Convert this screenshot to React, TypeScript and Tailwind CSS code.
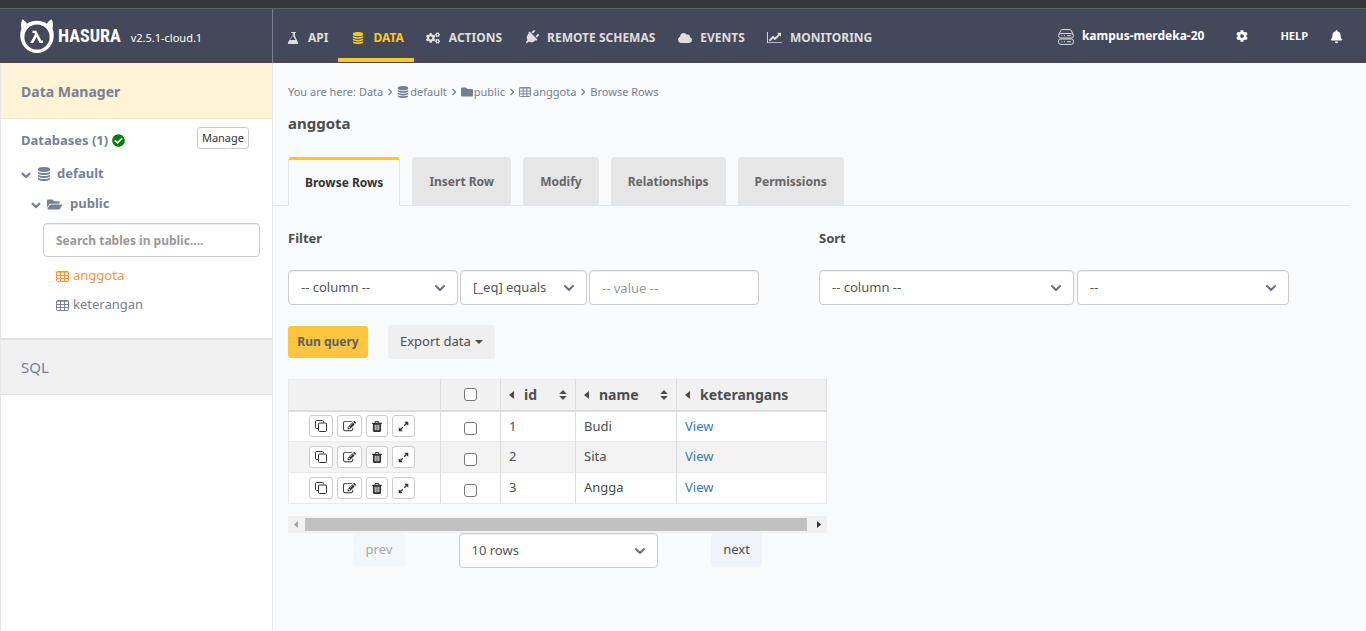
import type { ReactNode } from 'react';
import {
  FaBell,
  FaCheckCircle,
  FaCloud,
  FaCog,
  FaCogs,
  FaFolder,
  FaFolderOpen,
  FaPlug,
} from 'react-icons/fa';
import { ChevronDown } from 'lucide-react';

type IconProps = { className?: string };

function Glyph({ d, viewBox = '0 0 1792 1792', className }: { d: string; viewBox?: string; className?: string }) {
  return (
    <svg viewBox={viewBox} fill="currentColor" aria-hidden="true" className={className}>
      <path d={d} />
    </svg>
  );
}

const DATABASE =
  'M896 768q237 0 443-43t325-127v170q0 69-103 128t-280 93.5-385 34.5-385-34.5-280-93.5-103-128v-170q119 84 325 127t443 43zm0 768q237 0 443-43t325-127v170q0 69-103 128t-280 93.5-385 34.5-385-34.5-280-93.5-103-128v-170q119 84 325 127t443 43zm0-384q237 0 443-43t325-127v170q0 69-103 128t-280 93.5-385 34.5-385-34.5-280-93.5-103-128v-170q119 84 325 127t443 43zm0-1152q208 0 385 34.5t280 93.5 103 128v128q0 69-103 128t-280 93.5-385 34.5-385-34.5-280-93.5-103-128v-128q0-69 103-128t280-93.5 385-34.5z';
const FLASK =
  'M1527 1447q56 89 21.5 153t-140.5 64h-1024q-106 0-140.5-64t21.5-153l503-793v-399h-64q-26 0-45-19t-19-45 19-45 45-19h512q26 0 45 19t19 45-19 45-45 19h-64v399zm-749-725l-272 430h712l-272-430-20-31v-436h-128v436z';
const LINE_CHART =
  'M2048 1536v128h-2048v-1536h128v1408h1920zM1920 288v435q0 21-19.5 29.5t-35.5-7.5l-121-121-633 633q-10 10-23 10t-23-10l-233-233-416 416-192-192 585-585q10-10 23-10t23 10l233 233 464-464-121-121q-16-16-7.5-35.5t29.5-19.5h435q14 0 23 9t9 23z';
const EDIT =
  'M888 1184l116-116-152-152-116 116v56h96v96h56zm440-720q-16-16-33 1l-350 350q-17 17-1 33t33-1l350-350q17-17 1-33zm80 594v190q0 119-84.5 203.5t-203.5 84.5h-832q-119 0-203.5-84.5t-84.5-203.5v-832q0-119 84.5-203.5t203.5-84.5h832q63 0 117 25 15 7 18 23 3 17-9 29l-49 49q-14 14-32 8-23-6-45-6h-832q-66 0-113 47t-47 113v832q0 66 47 113t113 47h832q66 0 113-47t47-113v-126q0-13 9-22l64-64q15-15 35-7t20 29zm-96-738l288 288-672 672h-288v-288zm444 132l-92 92-288-288 92-92q28-28 68-28t68 28l152 152q28 28 28 68t-28 68z';
const TRASH =
  'M704 1376v-704q0-14-9-23t-23-9h-64q-14 0-23 9t-9 23v704q0 14 9 23t23 9h64q14 0 23-9t9-23zm256 0v-704q0-14-9-23t-23-9h-64q-14 0-23 9t-9 23v704q0 14 9 23t23 9h64q14 0 23-9t9-23zm256 0v-704q0-14-9-23t-23-9h-64q-14 0-23 9t-9 23v704q0 14 9 23t23 9h64q14 0 23-9t9-23zm-544-992h448l-48-117q-7-9-17-11h-317q-10 2-17 11zm928 32v64q0 14-9 23t-23 9h-96v948q0 83-47 143.5t-113 60.5h-832q-66 0-113-58.5t-47-141.5v-952h-96q-14 0-23-9t-9-23v-64q0-14 9-23t23-9h309l70-167q15-37 54-63t79-26h320q40 0 79 26t54 63l70 167h309q14 0 23 9t9 23z';

const DatabaseIcon = ({ className }: IconProps) => <Glyph d={DATABASE} className={className} />;
const FlaskIcon = ({ className }: IconProps) => <Glyph d={FLASK} className={className} />;
const LineChartIcon = ({ className }: IconProps) => (
  <Glyph d={LINE_CHART} viewBox="0 0 2048 1792" className={className} />
);

function TableIcon({ className }: IconProps) {
  return (
    <svg viewBox="0 0 13 11" fill="none" stroke="currentColor" aria-hidden="true" className={className}>
      <rect x="0.5" y="0.5" width="12" height="10" rx="1" />
      <path d="M0.5 1.200h12M0.5 4.500h12M0.5 7.500h12M4.500 1v10M8.500 1v10" />
    </svg>
  );
}

function CloneIcon({ className }: IconProps) {
  return (
    <svg viewBox="0 0 12 12" fill="none" stroke="currentColor" aria-hidden="true" className={className}>
      <path d="M3.500 8.500h-2q-1 0-1-1v-6q0-1 1-1h6q1 0 1 1v1" />
      <rect x="3.500" y="3" width="8" height="8.500" rx="1" />
    </svg>
  );
}

function ExpandIcon({ className }: IconProps) {
  return (
    <svg viewBox="0 0 12 12" aria-hidden="true" className={className}>
      <path d="M6.800.8h4.400v4.400zM.8 6.800v4.400h4.400z" fill="currentColor" />
      <path d="M9.500 2.500 6.800 5.200M5.200 6.800 2.500 9.500" stroke="currentColor" strokeWidth="1.500" />
    </svg>
  );
}

function AngleIcon({ className }: IconProps) {
  return (
    <svg viewBox="0 0 4 8" fill="none" stroke="currentColor" strokeWidth="1.300" aria-hidden="true" className={className}>
      <path d="M.5 1 3.500 4 .5 7" />
    </svg>
  );
}

function TreeToggleIcon({ className }: IconProps) {
  return (
    <svg viewBox="0 0 10 10" fill="none" stroke="currentColor" strokeWidth="2.300" aria-hidden="true" className={className}>
      <path d="M1 3.200 5 7l4-3.800" />
    </svg>
  );
}

function ServerIcon({ className }: IconProps) {
  return (
    <svg viewBox="0 0 16 16" fill="none" stroke="currentColor" aria-hidden="true" className={className}>
      <path d="M1 5 2.800 1.500Q3.200.6 4 .6h8q.8 0 1.200.9L15 5" />
      <rect x="0.600" y="4.500" width="14.800" height="4.500" rx="2" />
      <rect x="0.600" y="10" width="14.800" height="5.400" rx="2" />
      <path d="M3.500 6.700h1M6 6.700h1M9 6.700h4M3.500 12.700h1M6 12.700h1M9 12.700h4" />
    </svg>
  );
}

function HasuraMark({ className }: IconProps) {
  return (
    <svg viewBox="0 0 34 34" aria-hidden="true" className={className}>
      <path
        d="M2.4.2C4.6 1.4 6 3 7 4.700 10 2.700 13 1.800 16.700 1.800S23.800 2.700 27 4.700C28 3 29.400 1.400 31.600.2c1.600 3 1.700 6.300.9 9.600 1 2.200 1.400 4.700 1.200 7.700C33.200 26.900 25.900 34 17 34S.8 26.900.3 17.500C.1 14.500.5 12 1.500 9.800.7 6.500.8 3.200 2.400.2Z"
        fill="currentColor"
      />
      <circle cx="17" cy="18" r="12.600" fill="#43495a" />
      <path
        d="M12.500 11.800h3.800l5 9.800h1.600v2.500h-3.200l-3.200-6.200-3.200 6.200h-3.100l4.800-8.800-.7-1.300h-1.800z"
        fill="currentColor"
      />
    </svg>
  );
}

function NavItem({ icon, label, active = false }: { icon: ReactNode; label: string; active?: boolean }) {
  return (
    <a
      href="#"
      aria-current={active ? 'page' : undefined}
      className={`flex items-center gap-2 border-b-4 pt-2 pr-2.5 pl-3 text-xs font-bold ${
        active ? 'border-[#ffc627] text-[#ffc627]' : 'border-transparent text-[#dedede]'
      }`}
    >
      <span className="flex w-[15px] justify-center">{icon}</span>
      {label}
    </a>
  );
}

function SelectBox({ label, options, className }: { label: string; options: string[]; className: string }) {
  return (
    <div className={`relative ${className}`}>
      <select
        aria-label={label}
        className="h-[35px] w-full appearance-none rounded border border-[#ccc] bg-white px-3 text-[13px] text-[#555] shadow-[inset_0_1px_1px_rgba(0,0,0,0.075)]"
      >
        {options.map((o) => (
          <option key={o}>{o}</option>
        ))}
      </select>
      <ChevronDown className="pointer-events-none absolute top-2.5 right-2.5 size-4 text-[#6b7280]" strokeWidth={3} />
    </div>
  );
}

function RowAction({ label, children }: { label: string; children: ReactNode }) {
  return (
    <button
      type="button"
      aria-label={label}
      className="flex h-[22px] items-center justify-center rounded-[3px] border border-[#ccc] bg-white px-[5px] text-[#333]"
    >
      {children}
    </button>
  );
}

function Tick({ label }: { label: string }) {
  return (
    <input
      type="checkbox"
      aria-label={label}
      className="mx-auto block size-[13px] appearance-none rounded-[3px] border border-[#767676] bg-white checked:bg-[#1a73e8]"
    />
  );
}

function HeaderCell({ label, sortable = true }: { label: string; sortable?: boolean }) {
  return (
    <th className="border-r border-[#ddd] px-2 text-left">
      <div className="flex items-center text-sm font-bold text-[#4d4d4d]">
        <svg viewBox="0 0 5 8" aria-hidden="true" className="mr-2.5 h-2 w-[5px]" fill="currentColor">
          <path d="M5 0v8L0 4z" />
        </svg>
        {label}
        {sortable && (
          <svg viewBox="0 0 8 10" aria-hidden="true" className="ml-auto h-2.5 w-2" fill="currentColor">
            <path d="M4 0l3.800 4H.2zM4 10l3.800-4H.2z" />
          </svg>
        )}
      </div>
    </th>
  );
}

const TABS = ['Browse Rows', 'Insert Row', 'Modify', 'Relationships', 'Permissions'];
const ROWS = [
  { id: 1, name: 'Budi' },
  { id: 2, name: 'Sita' },
  { id: 3, name: 'Angga' },
];

function Header() {
  return (
    <header className="flex h-[54px] bg-[#43495a]">
      <div className="flex w-[273px] shrink-0 items-center border-r border-[#788095] pl-5 text-white">
        <HasuraMark className="size-[34px]" />
        <span className="ml-1 font-['Liberation_Sans_Narrow','Roboto_Condensed','DejaVu_Sans_Condensed',sans-serif] text-lg font-bold">
          HASURA
        </span>
        <span className="ml-2.5 pt-1 text-[11px]">v2.5.1-cloud.1</span>
      </div>
      <nav className="flex pb-px">
        <NavItem icon={<FlaskIcon className="size-3.5" />} label="API" />
        <NavItem icon={<DatabaseIcon className="size-3" />} label="DATA" active />
        <NavItem icon={<FaCogs className="size-3.5" />} label="ACTIONS" />
        <NavItem icon={<FaPlug className="size-[15px] rotate-45" />} label="REMOTE SCHEMAS" />
        <NavItem icon={<FaCloud className="size-3.5" />} label="EVENTS" />
        <NavItem icon={<LineChartIcon className="h-[13px] w-[15px]" />} label="MONITORING" />
      </nav>
      <div className="ml-auto flex items-center pr-[23px] text-white">
        <ServerIcon className="mt-0.5 mr-2 size-4 text-[#dedede]" />
        <span className="text-xs font-bold">kampus-merdeka-20</span>
        <button type="button" aria-label="Settings" className="ml-8">
          <FaCog className="size-3" />
        </button>
        <a href="#" className="ml-8 text-[11px] font-bold">
          HELP
        </a>
        <button type="button" aria-label="Notifications" className="ml-[22px]">
          <FaBell className="size-[13px]" />
        </button>
      </div>
    </header>
  );
}

function Sidebar() {
  return (
    <aside className="w-[273px] shrink-0 border-x border-[#e5e7eb] bg-white text-[#788095]">
      <h2 className="flex h-14 items-center border-b border-[#e5e5e5] bg-[#fff3d5] px-5 pt-0.5 text-sm font-bold">
        Data Manager
      </h2>
      <div className="h-[221px] border-b-2 border-[#e1e1e1] pt-2">
        <div className="flex items-start justify-between pr-[23px] pl-5">
          <div className="flex h-[23px] items-end gap-1 text-[13px] leading-5 font-bold">
            Databases (1)
            <FaCheckCircle className="mb-[3px] size-[13px] text-[#008000]" />
          </div>
          <button type="button" className="h-[22px] rounded-[3px] border border-[#ccc] px-1 text-[11px] text-[#333]">
            Manage
          </button>
        </div>
        <div className="mt-3.5 flex h-5 items-center pl-5 text-[13px] font-bold">
          <TreeToggleIcon className="mt-0.5 mr-1.5 size-2.5" />
          <DatabaseIcon className="mr-1.5 size-3.5" />
          default
        </div>
        <div className="mt-2.5 flex h-5 items-center pl-[30px] text-[13px] font-bold">
          <TreeToggleIcon className="mt-0.5 mr-1.5 size-2.5" />
          <FaFolderOpen className="mr-2 size-[15px]" />
          public
        </div>
        <input
          type="text"
          aria-label="Search tables"
          placeholder="Search tables in public...."
          className="mt-[9px] ml-[42px] h-[34px] w-[217px] rounded border border-[#ccc] bg-white px-3 text-xs font-bold shadow-[inset_0_1px_1px_rgba(0,0,0,0.075)] placeholder:text-[#999]"
        />
        <a href="#" className="mt-[9px] flex h-5 items-center gap-1 pl-[55px] text-[13px] text-[#fd9540]">
          <TableIcon className="h-[11px] w-[13px]" />
          anggota
        </a>
        <a href="#" className="mt-[9px] flex h-5 items-center gap-1 pl-[55px] text-[13px]">
          <TableIcon className="h-[11px] w-[13px]" />
          keterangan
        </a>
      </div>
      <a href="#" className="flex h-[55px] items-center border-b border-[#e1e1e1] bg-[#f0f0f0] px-5 pt-px text-[15px]">
        SQL
      </a>
    </aside>
  );
}

function Crumbs() {
  return (
    <nav aria-label="Breadcrumb" className="flex h-4 items-center gap-[5px] text-[11px] text-[#767e8c]">
      <span>You are here: Data</span>
      <AngleIcon className="h-2 w-1" />
      <span className="flex items-center gap-px">
        <DatabaseIcon className="size-3" />
        default
      </span>
      <AngleIcon className="h-2 w-1" />
      <span className="flex items-center gap-px">
        <FaFolder className="size-3" />
        public
      </span>
      <AngleIcon className="h-2 w-1" />
      <span className="flex items-center gap-0.5">
        <TableIcon className="h-2.5 w-3" />
        anggota
      </span>
      <AngleIcon className="h-2 w-1" />
      <span>Browse Rows</span>
    </nav>
  );
}

function DataTable() {
  return (
    <table className="w-full table-fixed border-collapse border border-[#e8e9ec] text-[13px] text-[#4d4d4d]">
      <colgroup>
        <col className="w-[152px]" />
        <col className="w-[60px]" />
        <col className="w-[75px]" />
        <col className="w-[101px]" />
        <col />
      </colgroup>
      <thead className="border-b-2 border-[#ddd] bg-[#f1f1f1]">
        <tr className="h-[31px]">
          <th className="border-r border-[#ddd]" aria-label="Actions" />
          <th className="border-r border-[#ddd]">
            <Tick label="Select all rows" />
          </th>
          <HeaderCell label="id" />
          <HeaderCell label="name" />
          <HeaderCell label="keterangans" sortable={false} />
        </tr>
      </thead>
      <tbody>
        {ROWS.map((r) => (
          <tr key={r.id} className="h-[31px] border-b border-[#e8e9ec] bg-white even:bg-[#f3f3f3]">
            <td className="border-r border-[#ddd] pl-5">
              <div className="flex gap-1">
                <RowAction label="Clone row">
                  <CloneIcon className="size-3" />
                </RowAction>
                <RowAction label="Edit row">
                  <Glyph d={EDIT} className="size-[13px]" />
                </RowAction>
                <RowAction label="Delete row">
                  <Glyph d={TRASH} className="h-[11px] w-2.5" viewBox="192 128 1408 1536" />
                </RowAction>
                <RowAction label="Expand row">
                  <ExpandIcon className="size-[11px]" />
                </RowAction>
              </div>
            </td>
            <td className="border-r border-[#ddd] pt-1">
              <Tick label={`Select row ${r.id}`} />
            </td>
            <td className="border-r border-[#ddd] px-2">{r.id}</td>
            <td className="border-r border-[#ddd] px-2">{r.name}</td>
            <td className="px-2">
              <a href="#" className="text-[#337ab7]">
                View
              </a>
            </td>
          </tr>
        ))}
      </tbody>
    </table>
  );
}

export default function App() {
  return (
    <div className="flex min-h-screen flex-col bg-[#f9fafc] font-['Noto_Sans',sans-serif]">
      <div className="h-[9px] border-b border-[#5f6368] bg-[#35363a]" />
      <Header />
      <div className="flex flex-1">
        <Sidebar />
        <main className="min-w-0 flex-1 pt-[21px] pr-4">
          <div className="pl-[15px]">
            <Crumbs />
            <h1 className="mt-[11px] text-[15px] leading-6 font-bold text-[#4d4d4d]">anggota</h1>
          </div>
          <div role="tablist" className="mt-[22px] flex gap-3 border-b border-[#e1e4e8] pl-[15px]">
            {TABS.map((t, i) => (
              <button
                key={t}
                type="button"
                role="tab"
                aria-selected={i === 0}
                className={
                  i === 0
                    ? '-mb-px h-[49px] rounded-t border-x border-t-3 border-x-[#e1e4e8] border-t-[#ffc627] bg-[#f9fafc] px-4 text-xs font-bold text-[#333]'
                    : 'h-12 rounded-t bg-[#e6e6e6] px-[17px] pt-0.5 text-xs font-bold text-[#666]'
                }
              >
                {t}
              </button>
            ))}
          </div>
          <div className="pt-[22px] pl-[15px]">
            <div className="flex text-[#4d4d4d]">
              <section className="w-1/2">
                <h3 className="text-[13px] leading-5 font-bold">Filter</h3>
                <div className="mt-[22px] flex gap-0.5">
                  <SelectBox label="Filter column" options={['-- column --', 'id', 'name']} className="w-[170px]" />
                  <SelectBox label="Operator" options={['[_eq] equals']} className="w-[127px]" />
                  <input
                    type="text"
                    aria-label="Filter value"
                    placeholder="-- value --"
                    className="h-[35px] w-[170px] rounded border border-[#ccc] bg-white px-3 text-[13px] shadow-[inset_0_1px_1px_rgba(0,0,0,0.075)] placeholder:text-[#999]"
                  />
                </div>
              </section>
              <section className="w-1/2">
                <h3 className="text-[13px] leading-5 font-bold">Sort</h3>
                <div className="mt-[22px] flex gap-[3px]">
                  <SelectBox label="Sort column" options={['-- column --', 'id', 'name']} className="w-[255px]" />
                  <SelectBox label="Sort order" options={['--', 'Asc', 'Desc']} className="w-[212px]" />
                </div>
              </section>
            </div>
            <div className="mt-5 flex items-center gap-5">
              <button
                type="button"
                className="h-8 w-20 rounded-[3px] bg-[#ffc53d] text-xs font-bold text-[#606060]"
              >
                Run query
              </button>
              <button
                type="button"
                className="flex h-[34px] items-center gap-1 rounded bg-[#efefef] px-3 text-[13px] text-[#4d4d4d]"
              >
                Export data
                <svg viewBox="0 0 8 4" aria-hidden="true" className="h-1 w-2" fill="currentColor">
                  <path d="M0 0h8L4 4z" />
                </svg>
              </button>
            </div>
            <div className="mt-5 w-[539px]">
              <DataTable />
              <div className="mt-3 flex h-[17px] items-center bg-[#f1f1f1]">
                <svg viewBox="0 0 17 17" aria-hidden="true" className="size-[17px]">
                  <path d="M10 5v7L6 8.500z" fill="#a3a3a3" />
                </svg>
                <div className="mr-[3px] h-[13px] flex-1 bg-[#c1c1c1]" />
                <svg viewBox="0 0 17 17" aria-hidden="true" className="size-[17px]">
                  <path d="M7 5v7l4-3.500z" fill="#333" />
                </svg>
              </div>
              <div className="flex justify-between px-[65px] text-[13px] text-[#4d4d4d]">
                <button type="button" disabled className="h-[34px] w-[52px] rounded bg-[#f4f7fa] text-[#a5a7a8]">
                  prev
                </button>
                <SelectBox label="Rows per page" options={['10 rows', '20 rows', '50 rows']} className="w-[199px]" />
                <button type="button" className="h-[34px] w-[51px] rounded bg-[#f0f4f9]">
                  next
                </button>
              </div>
            </div>
          </div>
        </main>
      </div>
    </div>
  );
}
